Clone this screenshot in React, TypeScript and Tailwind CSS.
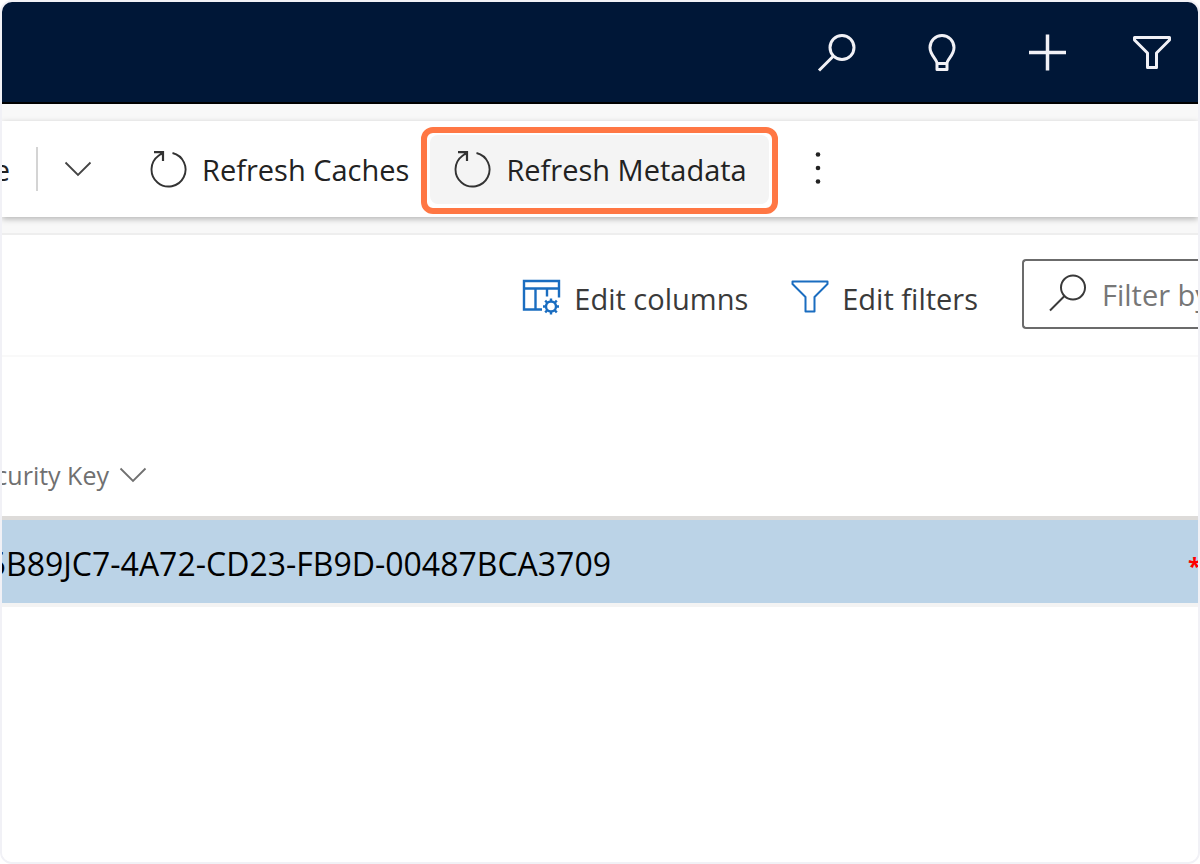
import type { ReactNode } from "react";

function Icon({ children, className = "" }: { children: ReactNode; className?: string }) {
  return (
    <svg
      width={40}
      height={40}
      viewBox="0 0 40 40"
      fill="none"
      stroke="currentColor"
      aria-hidden="true"
      className={`shrink-0 ${className}`}
    >
      {children}
    </svg>
  );
}

function SearchIcon({ stroke }: { stroke: number }) {
  return (
    <Icon>
      <g strokeWidth={stroke}>
        <circle cx="25" cy="14.500" r="12" />
        <path d="M16.500 23 L2 37.500" />
      </g>
    </Icon>
  );
}

function FunnelIcon({ stroke }: { stroke: number }) {
  return (
    <Icon>
      <path
        strokeWidth={stroke}
        strokeLinejoin="round"
        d="M2.500 4.500 H37.500 V7 L24.500 20 V34.500 H15.500 V20 L2.500 7 Z"
      />
    </Icon>
  );
}

function BulbIcon() {
  return (
    <Icon>
      <g strokeWidth="3" strokeLinejoin="round">
        <path d="M15 36.500 V30.500 C15 26 8 22.500 8 14.500 A12 12 0 0 1 32 14.500 C32 22.500 25 26 25 30.500 V36.500 Z" />
        <path d="M15 30.500 H25" />
      </g>
    </Icon>
  );
}

function PlusIcon() {
  return (
    <Icon>
      <path strokeWidth="3.500" d="M20.500 1.500 V37.500 M2 19.500 H39" />
    </Icon>
  );
}

function RefreshIcon() {
  return (
    <Icon className="text-[#333]">
      <path strokeWidth="1.900" d="M24.500 4 A17 17 0 1 1 10.500 6.800 L15 3.500" />
      <path strokeWidth="2.200" d="M6 3.200 H15 V12" />
      <path stroke="none" fill="currentColor" d="M10.500 3 H15.500 V8 Z" />
    </Icon>
  );
}

function ChevronIcon() {
  return (
    <svg width="28" height="16" viewBox="0 0 28 16" fill="none" stroke="currentColor" strokeWidth="1.800" aria-hidden="true" className="shrink-0">
      <path d="M1.500 1.500 L14 14 L26.500 1.500" />
    </svg>
  );
}

function ColumnsIcon() {
  return (
    <Icon className="text-[#1a6dc0]">
      <g strokeWidth="2.400">
        <path d="M20 32.500 H2 V4 H37 V20.500" />
        <path d="M2 11.500 H37 M13.500 11.500 V32.500 M25 11.500 V19.500" />
        <circle cx="29" cy="29.500" r="5" />
        <path d="M29 24.500 V21.500 M29 34.500 V37.500 M24 29.500 H21 M34 29.500 H37 M25.500 26 L23.200 23.700 M32.500 33 L34.800 35.300 M32.500 26 L34.800 23.700 M25.500 33 L23.200 35.300" />
      </g>
    </Icon>
  );
}

function AppHeader() {
  return (
    <header className="flex h-[102px] items-center justify-end gap-[65px] border-b-2 border-black bg-[#001737] pt-0.5 pr-[26px] text-[#f1f1f6]">
      <button type="button" aria-label="Search"><SearchIcon stroke={3} /></button>
      <button type="button" aria-label="Insights"><BulbIcon /></button>
      <button type="button" aria-label="New"><PlusIcon /></button>
      <button type="button" aria-label="Filter"><FunnelIcon stroke={3} /></button>
    </header>
  );
}

function CommandBar() {
  return (
    <div role="toolbar" aria-label="Commands" className="flex h-24 items-center bg-white shadow-[0_2px_6px_rgba(0,0,0,0.28)]">
      <button type="button" className="flex w-[34px] justify-end overflow-hidden pt-0.5 pr-[26px]">e</button>
      <div className="h-11 w-0.5 bg-[#d4d4d4]" />
      <button type="button" aria-label="More options" className="ml-[26px] text-[#444]"><ChevronIcon /></button>
      <button type="button" className="ml-14 flex items-center gap-3.5">
        <RefreshIcon />
        <span className="pt-0.5">Refresh Caches</span>
      </button>
      <div className="mt-0.5 ml-3 rounded-xl border-[6px] border-[#ff7744] px-[3px] pt-0.5 pb-1">
        <button type="button" className="flex h-[69px] items-center gap-3.5 rounded-lg bg-[#f4f4f4] px-[22px]">
          <RefreshIcon />
          <span className="pt-0.5">Refresh Metadata</span>
        </button>
      </div>
      <button type="button" aria-label="More commands" className="ml-[34px]">
        <svg width="12" height="36" viewBox="0 0 12 36" fill="currentColor" aria-hidden="true">
          <circle cx="6" cy="3.500" r="2.300" />
          <circle cx="6" cy="17" r="2.300" />
          <circle cx="6" cy="30.500" r="2.300" />
        </svg>
      </button>
    </div>
  );
}

function ViewBar() {
  return (
    <div className="flex h-[122px] items-center justify-end border-b-2 border-[#f9f9f9] text-[#3a3a3a]">
      <button type="button" className="flex items-center gap-3 pt-1">
        <ColumnsIcon />
        <span className="pt-1">Edit columns</span>
      </button>
      <button type="button" className="ml-[42px] flex items-center gap-3 pt-1">
        <span className="text-[#1a6dc0]"><FunnelIcon stroke={2} /></span>
        <span className="pt-1">Edit filters</span>
      </button>
      <label className="mb-0.5 ml-11 flex h-[70px] w-44 items-center gap-3.5 overflow-hidden rounded-l border-2 border-r-0 border-[#6b6b6b] pb-0.5 pl-6">
        <SearchIcon stroke={2} />
        <input
          type="text"
          aria-label="Filter by keyword"
          placeholder="Filter by keyword"
          className="w-64 shrink-0 bg-transparent pt-1 outline-none placeholder:text-[#777]"
        />
      </label>
    </div>
  );
}

function RecordGrid() {
  return (
    <table className="w-full table-fixed border-collapse">
      <thead>
        <tr className="h-[161px] border-b-4 border-[#dddbd9]">
          <th scope="col" className="p-0 pt-[102px] align-top font-normal">
            <button type="button" className="flex w-[145px] items-center justify-end gap-2.5 overflow-hidden text-[25px] leading-8 whitespace-nowrap text-[#707070]">
              Security Key
              <ChevronIcon />
            </button>
          </th>
          <th scope="col" aria-label="Required" className="w-12 p-0" />
        </tr>
      </thead>
      <tbody>
        <tr className="h-[87px] border-b-4 border-[#f3f3f3] bg-[#bbd3e7] text-black">
          <td className="p-0 pt-1">
            <div className="flex w-[609px] justify-end overflow-hidden text-[32px] leading-10 whitespace-nowrap">
              5B89JC7-4A72-CD23-FB9D-00487BCA3709
            </div>
          </td>
          <td className="overflow-hidden p-0 pt-2 pl-[38px] text-2xl font-bold text-[#ff0000]">*</td>
        </tr>
      </tbody>
    </table>
  );
}

export default function App() {
  return (
    <div className="min-h-screen bg-white font-['Open_Sans','Noto_Sans',sans-serif] text-[29px] leading-9 text-[#222]">
      <div className="flex min-h-screen flex-col overflow-hidden rounded-xl border-2 border-[#f1f1f6] bg-white">
        <AppHeader />
        <div className="bg-[#f8f8f8] pt-[17px] pb-4">
          <CommandBar />
        </div>
        <main className="flex-1 border-t-2 border-[#eee] bg-white">
          <ViewBar />
          <RecordGrid />
        </main>
      </div>
    </div>
  );
}
